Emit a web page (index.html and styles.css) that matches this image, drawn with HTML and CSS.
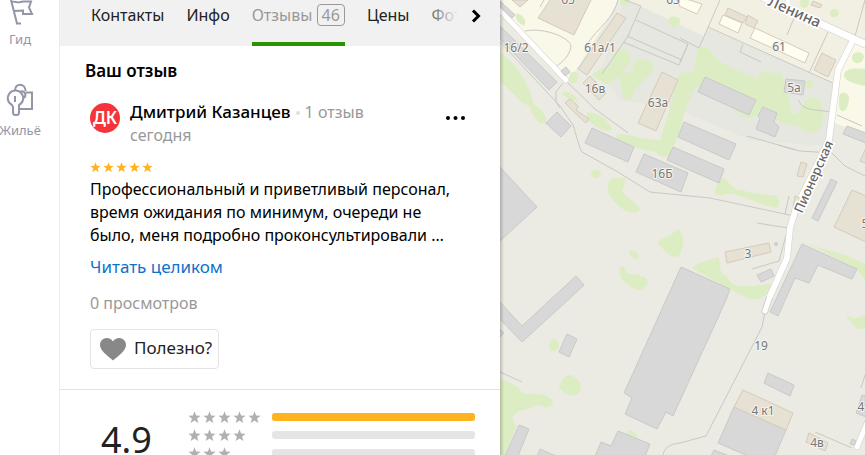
FILE: index.html
```html
<!DOCTYPE html>
<html lang="ru">
<head>
  <meta charset="UTF-8">
  <title>Отзывы</title>
  <meta name="viewport" content="width=device-width, initial-scale=1.0">
  <link rel="stylesheet" href="styles.css">
</head>
<body>

  <svg class="defs" aria-hidden="true">
    <symbol id="star" viewBox="0 0 14 14">
      <path d="M7 .4l1.7 4.5 4.9.2-3.8 3 1.3 4.8L7 10.200l-4.100 2.700 1.300-4.800L.4 5.100l4.900-.2z"/>
    </symbol>
  </svg>

  <aside class="sidebar">
    <a class="side-item" href="#">
      <svg width="28" height="28" viewBox="0 0 28 28">
        <path d="M11 25.500L5 2M10 25.500h5M5.500 4c3-1.500 6 1.500 9 0l3-.5h7.500l-2 6 3 6.500h-9v-3.500l-9 .5"/>
      </svg>
      <span>Гид</span>
    </a>
    <a class="side-item" href="#">
      <svg width="28" height="34" viewBox="0 0 28 34">
        <path d="M9 7.500C9-.5 19.500 0 19.500 8M19.500 9.500H26V26H14M9 13v6"/>
        <path d="M6 22A7.700 7.700 0 1 1 13 22L13 29.500Q13 32 10.500 32H9.500Q7 32 7 29.500V24zM14 9c3-2 6.500 1 5 5l-2 1.500"/>
      </svg>
      <span>Жильё</span>
    </a>
  </aside>

  <main class="panel">
    <nav class="tabs">
      <a class="tab" href="#">Контакты</a>
      <a class="tab" href="#">Инфо</a>
      <a class="tab active" href="#">Отзывы <span class="count">46</span></a>
      <a class="tab" href="#">Цены</a>
      <a class="tab" href="#">Фото</a>
      <button class="tabs-next" aria-label="Вперёд">
        <svg width="10" height="14" viewBox="0 0 10 14"><path d="M2 1.500L7.500 7 2 12.500"/></svg>
      </button>
    </nav>

    <section class="review">
      <h2>Ваш отзыв</h2>
      <div class="author">
        <span class="avatar">ДК</span>
        <div class="author-info">
          <div><b>Дмитрий Казанцев</b><i class="dot"></i><span class="muted">1 отзыв</span></div>
          <div class="date">сегодня</div>
        </div>
        <button class="more" aria-label="Ещё">
          <svg width="20" height="4" viewBox="0 0 20 4"><circle cx="2" cy="2" r="2"/><circle cx="9.500" cy="2" r="2"/><circle cx="17" cy="2" r="2"/></svg>
        </button>
      </div>
      <div class="stars">
        <svg><use href="#star"/></svg><svg><use href="#star"/></svg><svg><use href="#star"/></svg><svg><use href="#star"/></svg><svg><use href="#star"/></svg>
      </div>
      <p class="text">Профессиональный и приветливый персонал, время ожидания по минимум, очереди не было, меня подробно проконсультировали …</p>
      <a class="read-all" href="#">Читать целиком</a>
      <div class="views">0 просмотров</div>
      <button class="useful">
        <svg width="26" height="23" viewBox="0 0 26 23"><path d="M13 22.500C7 17.500 0 12.500 0 7 0 3 3 0 6.800 0 9.500 0 11.800 1.300 13 3.400 14.200 1.300 16.500 0 19.200 0 23 0 26 3 26 7c0 5.500-7 10.500-13 15.500z"/></svg>
        <span>Полезно?</span>
      </button>
    </section>

    <section class="summary">
      <div class="score">4.9</div>
      <div class="rows">
        <div class="row">
          <div class="row-stars"><svg><use href="#star"/></svg><svg><use href="#star"/></svg><svg><use href="#star"/></svg><svg><use href="#star"/></svg><svg><use href="#star"/></svg></div>
          <div class="bar"><div class="fill" style="width: 100%"></div></div>
        </div>
        <div class="row">
          <div class="row-stars"><svg><use href="#star"/></svg><svg><use href="#star"/></svg><svg><use href="#star"/></svg><svg><use href="#star"/></svg></div>
          <div class="bar"></div>
        </div>
        <div class="row">
          <div class="row-stars"><svg><use href="#star"/></svg><svg><use href="#star"/></svg><svg><use href="#star"/></svg></div>
          <div class="bar"></div>
        </div>
      </div>
    </section>
  </main>

  <div class="map">
    <svg viewBox="0 0 365 455" preserveAspectRatio="xMinYMin slice">
      <!-- кварталы -->
      <path fill="#faf8e8" d="M0 0H118L110 16 72 76 67 80 0 12z"/>
      <path fill="#f2f0e2" d="M124 0H365V90L333 83 208 28 204 38 140 8z"/>
      <path fill="#e7e7e1" d="M124 0L140 6 204 36 208 28 333 83 326 146 250 140 180 110 120 100 100 74z"/>
      <path fill="#faf8e8" d="M353 43L365 46V133L330 122 338 72z"/>

      <!-- зелень -->
      <g fill="#dcedc3">
        <path d="M0 52C12 62 22 72 30 92L34 105C42 109 48 118 46 124 36 126 32 112 29 106 18 102 12 90 0 82z"/>
        <path d="M16 14C22 12 28 22 24 26 19 23 15 20 16 14zM120 0H130C130 8 120 8 120 2zM168 20C170 14 182 16 180 23 175 30 168 27 168 20z"/>
        <path d="M69 78C69 70 78 70 78 77 78 85 69 86 69 78zM61 93C67 90 75 94 78 102L68 99z"/>
        <path d="M92 76C98 66 108 70 112 60 112 48 128 44 130 56 132 66 126 65 124 72 132 75 134 68 134 62 143 57 155 60 153 70 148 80 137 82 131 100 124 102 120 92 121 84 118 82 124 77 115 78 108 87 105 84 100 80z"/>
        <path d="M87 112C97 113 110 120 112 130 102 134 92 124 87 118zM116 135C128 132 140 140 160 140 166 120 172 104 178 76 184 70 192 74 194 70L196 56C196 46 206 44 212 52 220 66 240 70 257 79 262 65 268 75 280 73 288 82 288 100 292 114 300 117 302 102 310 98 322 96 324 106 323 118 322 136 306 136 298 126 280 126 272 112 245 118 228 104 210 98 196 86L185 110 182 122 178 137 173 147C170 160 160 158 156 152 140 150 128 144 116 140z"/>
        <path d="M301 4C298 -2 306 -3 309 0 309 10 303 9 299 5zM330 14C330 7 339 8 339 13 338 19 330 18 330 14zM305 84C305 78 314 80 313 85 311 91 305 88 305 84zM352 58C352 50 364 51 364 57 362 66 352 64 352 58zM344 76C344 68 356 68 365 69V86C356 84 346 82 344 76zM339 98C339 90 349 92 349 98 348 114 340 114 339 106z"/>
        <ellipse cx="96" cy="174" rx="5" ry="4"/>
        <path d="M108 184C110 176 120 178 125 178 126 186 120 190 124 194 130 200 138 204 140 209 138 214 128 214 120 207 112 200 106 194 108 184zM157 242C164 237 172 236 176 230 184 226 186 250 178 256 172 260 166 252 160 246zM129 252C130 247 138 252 139 256 138 262 129 257 129 252zM119 270C120 264 127 266 126 272 130 277 136 272 140 276 148 276 150 284 145 286 140 296 130 286 122 280z"/>
        <path d="M215 194C215 186 219 179 224 178 230 182 232 190 242 190 252 194 262 194 272 195 280 195 281 204 277 208 262 206 248 198 234 194 226 193 224 197 215 194zM180 230C184 238 182 247 180 250z"/>
        <path d="M192 268C200 260 212 260 218 257 222 262 216 272 228 277 230 290 252 286 271 284 270 296 258 302 246 298L230 289zM304 242C320 250 336 250 352 258L365 264V280L357 269z"/>
        <ellipse cx="54" cy="345" rx="5" ry="6"/>
        <path d="M59 387C60 380 67 374 71 375 78 378 82 384 81 389 78 400 64 396 59 387zM0 379C10 382 18 386 22 392 27 396 30 392 37 394 44 394 54 398 53 404 46 412 40 402 35 406 24 412 18 408 14 416 10 420 16 420 16 428L5 455H0zM128 430C132 429 140 436 138 438L127 434zM347 315C352 320 358 318 365 315V328C356 332 353 324 347 318z"/>
      </g>

      <!-- тропинки и ограды -->
      <g fill="none" stroke="#c9c9c4">
        <path d="M25 31C45 27 70 38 71 46 70 56 62 62 57 66M118 0C114 18 98 28 88 43M44 0L40 7M125 0L141 6M141 6L128 36 102 74M136 20L188 44 179 65 123 42M127 36L182 60M0 42L60 106 73 125 80 148M63 83L56 92V102L60 108M67 82L95 109 128 133"/>
        <path d="M220 0L199 48 180 38M188 44L180 62M243 44L240 52 261 62M208 27L333 83M328 32L309 73M294 18L287 35M365 0L355 36"/>
        <path d="M298 100C304 112 316 109 330 112M337 115L362 126M247 136L296 150M278 145L300 151 332 153 345 166 365 176"/>
        <path d="M80 148L82 152 118 172 150 192 180 195 210 198 294 216M289 196L285 214M257 223L288 228 279 261 252 269"/>
        <path d="M265 312L262 327 206 436 180 443C170 444 164 448 163 455M0 372L22 382M315 432L352 448M365 375L361 388"/>
      </g>

      <!-- дороги -->
      <g fill="none" stroke="#d0d0ca" stroke-linecap="round" stroke-linejoin="round">
        <path stroke-width="6" d="M-4 6L66 80"/>
        <path stroke-width="8" d="M260 -4L365 44"/>
        <path stroke-width="7" d="M353 40L338 70 329 140 296 208 290 228 287 258 270 296 265 311"/>
        <path stroke-width="6" d="M357 447L369 418M288 6V-4"/>
      </g>
      <g fill="none" stroke="#fff" stroke-linecap="round" stroke-linejoin="round">
        <path stroke-width="5" d="M-4 6L66 80M288 6V-4"/>
        <path stroke-width="7" d="M260 -4L365 44"/>
        <path stroke-width="6" d="M353 40L338 70 329 140 296 208 290 228 287 258 270 296"/>
        <path stroke-width="5" d="M270 296L265 311M357 447L369 418"/>
      </g>

      <!-- здания -->
      <g fill="#d8d8d8" stroke="#c9c9c9">
        <path d="M0 1L15 15 12 18 0 7zM0 26L57 82 49 90 0 39zM61 71L66 67 70 72 65 76zM57 112L71 126 61 137 46 123zM92 128L134 147 128 162 85 143zM144 154L188 173 181 192 136 172zM184 122L236 144 229 160 178 137zM173 147L224 169 219 183 167 160z"/>
        <path d="M205 77L256 100 249 115 198 92zM263 107L277 113 274 122 279 127 275 137 256 129 260 118 258 116zM286 79L305 81 303 95 284 92zM347 126L366 133V143L343 134zM331 179L337 182 318 221 312 218z"/>
        <path d="M-1 166L37 207-1 242zM76 276L84 285 68 300 22 342-1 318V301L22 326 50 300zM-1 328L4 333-1 338zM67 334L77 339 69 357 59 352z"/>
        <path d="M181 267L230 289 226 300 173 416 166 412 157 429 125 414 132 398 124 393zM118 431L150 444 145 456H95L101 442 111 446zM19 425L29 429 18 456H5zM40 449L56 456H37zM257 275L271 269 274 276 261 282z"/>
        <path d="M302 244L357 269 352 279 318 265 309 283 295 278 278 316 270 312zM268 373L294 385 290 396 264 383zM234 407L286 430 275 456H248L218 443zM214 450L229 456H211zM362 395L366 396V417L356 413zM352 439L356 441 354 445 350 444z"/>
        <circle cx="276" cy="244" r="1.500"/>
      </g>
      <g fill="#e6e1d3" stroke="#d4cbbb">
        <path d="M12 0H28L20 7zM54-6L93-4 74 35 38 18zM117 13L126 18 87 75 78 69zM90 76L106 93 99 100 83 83zM70 99L78 106 76 110 89 119 86 123 75 113 65 103zM162 72L178 80 156 131 138 123z"/>
        <path d="M228 8L247 17 243 23 225 15zM248 15L258 21 254 28 245 24zM322 53L336 60 328 77 314 70zM313 1L322 5 320 8 311 5zM301 162L307 164 303 177 297 176zM295 196L300 198 297 208 293 207z"/>
        <path d="M352 190L366 196V242L334 227zM366 148L360 161 366 163zM225 252L269 243 271 252 227 263zM243 390L293 413 286 430 234 407zM309 433L328 443 325 451 306 442z"/>
        <path fill="#fffdef" d="M180-3L202 4 197 14 179 6zM223 15L242 23 238 33 219 24zM255 28L309 53 305 63 250 38z"/>
      </g>

      <g class="labels">
        <text x="68" y="4">65</text>
        <text x="173" y="4">63</text>
        <text x="16" y="52">16/2</text>
        <text x="100" y="52">61а/1</text>
        <text x="95" y="93">16в</text>
        <text x="158" y="107">63а</text>
        <text x="279" y="51">61</text>
        <text x="294" y="92">5а</text>
        <text x="162" y="178">16Б</text>
        <text x="248" y="258">3</text>
        <text x="365" y="228">5</text>
        <text x="261" y="350">19</text>
        <text x="263" y="415">4 к1</text>
        <text x="317" y="447">4в</text>
        <text x="361" y="411">4</text>
      </g>
      <text class="street" transform="translate(267 5) rotate(24)">Ленина</text>
      <text class="street small" transform="translate(302 214) rotate(-66)">Пионерская</text>
    </svg>
  </div>

</body>
</html>
```
FILE: styles.css
```css
* {
  box-sizing: border-box;
}

body {
  display: flex;
  height: 100vh;
  margin: 0;
  overflow: hidden;
  font-family: 'Noto Sans', sans-serif;
  font-size: 17px;
  line-height: 23px;
  color: #000;
  background: #fff;
}

a {
  color: inherit;
  text-decoration: none;
}

button {
  padding: 0;
  border: none;
  background: none;
  font: inherit;
  cursor: pointer;
}

svg {
  display: block;
}

.defs {
  position: absolute;
  width: 0;
  height: 0;
}

/* left menu */
.sidebar {
  display: flex;
  flex-direction: column;
  flex: none;
  gap: 35px;
  width: 60px;
  padding-right: 19px;
  border-right: 1px solid #ececec;
}

.side-item {
  display: flex;
  flex-direction: column;
  align-items: center;
  gap: 4px;
  font-size: 13px;
  line-height: 18px;
  color: #9396a8;
}

.side-item:first-child {
  margin-top: -2px;
}

.side-item svg {
  fill: none;
  stroke: #9396a8;
  stroke-width: 2;
}

/* review panel */
.panel {
  flex: none;
  width: 440px;
}

.tabs {
  position: relative;
  display: flex;
  gap: 22px;
  height: 46px;
  padding-left: 31px;
  overflow: hidden;
  font-size: 16px;
  white-space: nowrap;
  background: #f1f1f1;
  color: #222;
}

.tab {
  height: 46px;
  padding-top: 4px;
}

.tab.active {
  border-bottom: 4px solid #299400;
  color: #999;
}

.count {
  display: inline-block;
  padding: 0 4px;
  border: 1px solid #999;
  border-radius: 4px;
  line-height: 20px;
}

.tabs-next {
  position: absolute;
  top: 0;
  right: 0;
  display: flex;
  justify-content: flex-end;
  width: 70px;
  height: 46px;
  padding: 9px 19px 0 0;
  background: linear-gradient(90deg, rgba(241,241,241,0.3), #f1f1f1 40%);
}

.tabs-next path {
  fill: none;
  stroke: #000;
  stroke-width: 3;
}

.review {
  padding: 13px 30px 20px;
  border-bottom: 1px solid #e3e3e3;
}

.review h2 {
  margin: 0 -5px 18px;
  font-size: 17px;
  font-weight: 600;
}

.author {
  display: flex;
  gap: 10px;
}

.author b {
  font-weight: 500;
}

.author-info {
  flex: 1;
}

.avatar {
  width: 30px;
  height: 30px;
  margin-top: 3px;
  border-radius: 50%;
  background: #f5333a;
  color: #fff;
  font-size: 17px;
  font-weight: 600;
  line-height: 29px;
  text-align: center;
}

.dot {
  display: inline-block;
  width: 4px;
  height: 4px;
  margin: 0 5px;
  border-radius: 50%;
  background: #e0e0e0;
  vertical-align: middle;
}

.muted,
.date,
.views {
  color: #999;
  font-size: 16px;
}

.more {
  align-self: flex-start;
  margin: 16px 4px 0 0;
}

.stars {
  display: flex;
  gap: 2px;
  margin: 15px 0 5px;
}

.stars svg {
  width: 11px;
  height: 11px;
  fill: #ffb41f;
}

.text {
  margin: 0 8px 8px 0;
  font-size: 16px;
}

.read-all {
  color: #0d72cb;
}

.views {
  margin: 14px 0;
}

.useful {
  display: flex;
  align-items: center;
  gap: 8px;
  height: 40px;
  padding: 0 6px 0 9px;
  border: 1px solid #e3e3e3;
  border-radius: 4px;
  color: #222;
}

.useful span {
  padding-bottom: 3px;
}

.useful svg {
  fill: #888;
}

/* rating */
.summary {
  display: flex;
  padding: 18px 25px 0 41px;
}

.score {
  width: 87px;
  margin-top: 8px;
  color: #222;
  font-size: 36px;
  line-height: 48px;
}

.rows {
  flex: 1;
}

.row {
  display: flex;
  align-items: center;
  height: 18px;
}

.row-stars {
  display: flex;
  gap: 2px;
  width: 84px;
}

.row-stars svg {
  width: 13px;
  height: 13px;
  fill: #b0b0b0;
}

.bar {
  flex: 1;
  height: 8px;
  border-radius: 3px;
  background: #e5e5e5;
}

.fill {
  height: 8px;
  border-radius: 3px;
  background: #ffb41f;
}

/* map */
.map {
  position: relative;
  flex: 1;
  background: #ebebe3;
}

.map svg {
  width: 100%;
  height: 100%;
}

.map::before {
  content: '';
  position: absolute;
  top: 0;
  bottom: 0;
  left: 0;
  width: 4px;
  background: linear-gradient(90deg, rgba(0,0,0,0.2), rgba(0,0,0,0));
}

.labels {
  font-size: 12px;
  fill: #777;
  stroke: #f4f4f0;
  stroke-width: 2px;
  paint-order: stroke;
  text-anchor: middle;
}

.street {
  font-size: 15px;
  font-weight: 500;
  fill: #666;
  stroke: #fff;
  stroke-width: 3px;
  paint-order: stroke;
}

.street.small {
  font-size: 13px;
}
```
